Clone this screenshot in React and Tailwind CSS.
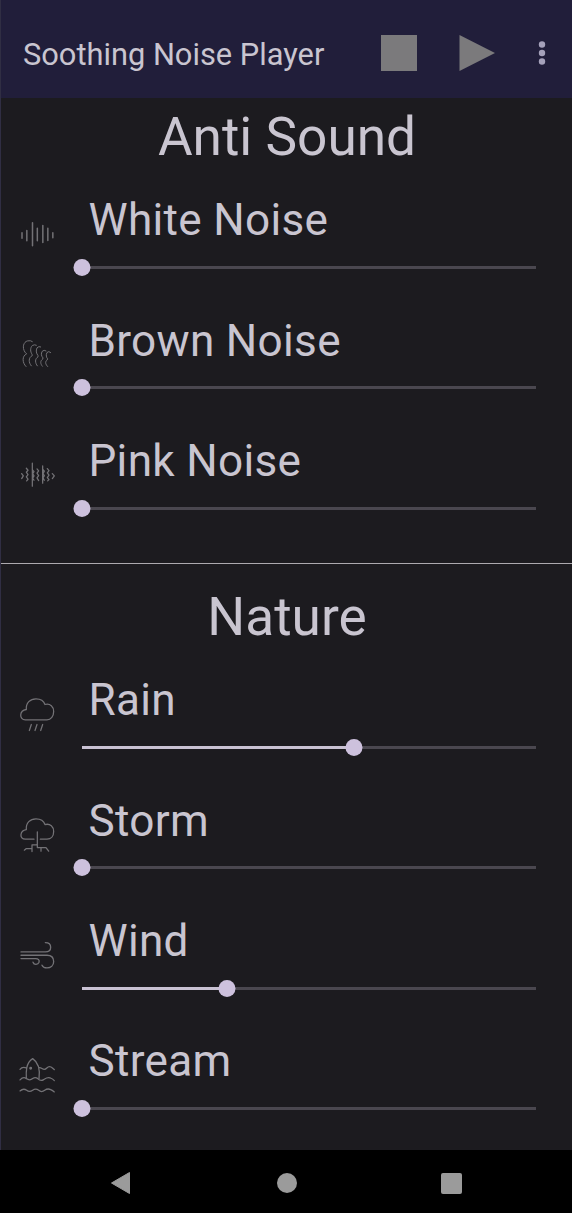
import React from "react";

function Icon({ viewBox, width = 4, children }) {
  return (
    <svg
      className="mt-[39.5px] ml-4 size-10 shrink-0"
      viewBox={viewBox}
      fill="none"
      stroke="#737276"
      strokeWidth={width}
      strokeLinecap="round"
      strokeLinejoin="round"
    >
      {children}
    </svg>
  );
}

const WhiteIcon = () => (
  <Icon viewBox="21 14.5 120 120" width={4.5}>
    <path d="M36 68v16M50.500 61v31M67.500 38v69M82 54v38M98.500 46v51M113.500 54v37M128.500 68v15" />
  </Icon>
);

const BrownIcon = () => (
  <Icon viewBox="21 14.4 120 120" width={3}>
    <path d="M67 34Q62 30 53 32C40 35 36 52 45 66L50 71C36 77 36 97 48 109" />
    <path d="M79 45Q73 42 67 46C60 53 61 65 66 72L67 76C55 82 55 97 64 107" />
    <path d="M92 50Q86 47 81 53C77 61 79 70 84 76L84 80C74 86 75 98 82 107" />
    <path d="M108 62Q102 58 97 63C92 70 94 78 99 83L98 87C90 92 91 101 97 108" />
    <path d="M122 67Q116 61 111 67C107 74 109 82 113 86L111 90C104 95 107 103 113 109" />
  </Icon>
);

const PinkIcon = () => (
  <Icon viewBox="21 15.3 120 120" width={3.8}>
    <path d="M35 71L40 78L35 86M49 55L54 61L49 67L54 74L49 81L54 88L50 93M67 40V109M67 59L72 65L68 71L72 78L68 85L72 91M81 57L86 63L81 70L86 77L81 84L86 92M98 48V100M98 58L103 64L99 71L103 77L99 84L103 91M112 56L117 62L112 69L117 76L112 83L117 89L113 93M127 71L133 78L127 86" />
  </Icon>
);

const Cloud = ({ d }) => <path d={d} />;

const RainIcon = () => (
  <Icon viewBox="21 43.5 120 120" width={3.8}>
    <Cloud d="M46 118C27 118 27 90 49 87C47 67 61 55 78 55C92 55 102 63 105 72C121 68 131 79 131 93C131 107 123 118 111 118Z" />
    <path d="M64 132L58 150M81 132L75 150M98 132L92 150" />
  </Icon>
);

const StormIcon = () => (
  <Icon viewBox="21 29.4 120 120" width={3.8}>
    <Cloud d="M72 102H46C27 102 29 76 49 73C47 52 61 41 78 41C92 41 102 49 105 58C121 54 131 65 131 79C131 93 123 102 111 102H91" />
    <path d="M82 80V127M80 119H66V130H49L43 135M66 130V139M83 127H108L116 138M93 128V138" />
  </Icon>
);

const WindIcon = () => (
  <Icon viewBox="21 15.3 120 120" width={4}>
    <path d="M33 66H106C116 66 122 61 122 52C122 44 116 38 106 38M33 76H111C123 76 131 83 131 95C131 107 122 114 111 114C103 114 98 111 96 106M33 86H77C85 86 89 91 87 97C84 105 72 106 69 97" />
  </Icon>
);

const StreamIcon = () => (
  <Icon viewBox="21 31.2 120 120" width={3.8}>
    <path d="M30 71Q37 62 49 67M87 66C95 65 96 71 103 71C110 71 111 63 118 63C126 63 127 68 133 72M49 99C48 80 47 52 68 39C88 52 90 76 87 99" />
    <path d="M30 103Q40 92 49 99C56 104 61 105 68 99Q76 93 83 99Q92 108 101 102C109 97 114 93 123 98Q128 100 133 105M30 136C38 129 43 129 50 134C56 139 61 139 68 134C75 129 79 129 86 134C93 140 98 139 104 134C111 129 116 129 122 132Q128 135 133 139" />
    <circle cx="62" cy="68" r="2.500" fill="#737276" />
  </Icon>
);

function Slider({ value }) {
  return (
    <div className="relative ml-[-7px] flex h-4 w-[454px] items-center">
      <div className="h-[3px] w-full bg-[#4a474f]">
        <div className="h-full bg-[#c9c2d3]" style={{ width: `${value}%` }} />
      </div>
      <div
        className="absolute size-[17px] -translate-x-1/2 rounded-full bg-[#cdc1dd]"
        style={{ left: `${value}%` }}
      />
    </div>
  );
}

function SoundRow({ icon: RowIcon, name, value = 0 }) {
  return (
    <div className="flex h-[120.3px]">
      <RowIcon />
      <div className="ml-8 flex flex-1 flex-col">
        <div className="-ml-[0.5px] h-[84.500px] pt-[19.3px] text-[44.1px] leading-[52px] tracking-[0.3px]">{name}</div>
        <Slider value={value} />
      </div>
    </div>
  );
}

function Section({ title, sounds }) {
  return (
    <section>
      <h2 className="h-[77px] pt-[6.5px] pl-px text-center text-[53.2px] leading-[64px]">{title}</h2>
      {sounds.map((s) => (
        <SoundRow key={s.name} {...s} />
      ))}
    </section>
  );
}

export default function App() {
  return (
    <div className="flex h-[1213px] w-[572px] flex-col overflow-hidden bg-[#1c1b1f] font-['Roboto',sans-serif] text-[#c9c5d0]">
      <div className="flex h-[1150px] flex-col border-l border-[#302e43]">
        <header className="flex h-[98px] shrink-0 items-center bg-[#211e3a] pt-[9px] pl-[22px]">
          <h1 className="w-[357px] pt-[4px] text-[30.8px] whitespace-nowrap">Soothing Noise Player</h1>
          <svg className="mb-[1px] h-9 w-[170px]" viewBox="0 0 170 36">
            <path fill="#7b7a7c" d="M1 0h36v36H1zM79.500 0v36L115 18z" />
            <g fill="#a5a1ba">
              <circle cx="162" cy="9.500" r="3.200" />
              <circle cx="162" cy="18" r="3.200" />
              <circle cx="162" cy="26.500" r="3.200" />
            </g>
          </svg>
        </header>
        <main>
          <Section
            title="Anti Sound"
            sounds={[
              { name: "White Noise", icon: WhiteIcon },
              { name: "Brown Noise", icon: BrownIcon },
              { name: "Pink Noise", icon: PinkIcon },
            ]}
          />
          <div className="mt-[27px] mb-[14.3px] h-px bg-[#adaaaf]" />
          <Section
            title="Nature"
            sounds={[
              { name: "Rain", icon: RainIcon, value: 60 },
              { name: "Storm", icon: StormIcon },
              { name: "Wind", icon: WindIcon, value: 32 },
              { name: "Stream", icon: StreamIcon },
            ]}
          />
        </main>
      </div>
      <nav className="flex flex-1 items-center justify-between bg-black pt-[3px] pr-[110px] pl-[110px]">
        <svg className="h-6 w-[22px]" viewBox="0 0 22 24">
          <path d="M1.500 12L19.500 1.500V22.500Z" fill="#9b9b9b" stroke="#9b9b9b" strokeWidth="1" strokeLinejoin="round" />
        </svg>
        <div className="size-5 rounded-full bg-[#9b9b9b]" />
        <div className="size-[21px] rounded-[2px] bg-[#9b9b9b]" />
      </nav>
    </div>
  );
}
